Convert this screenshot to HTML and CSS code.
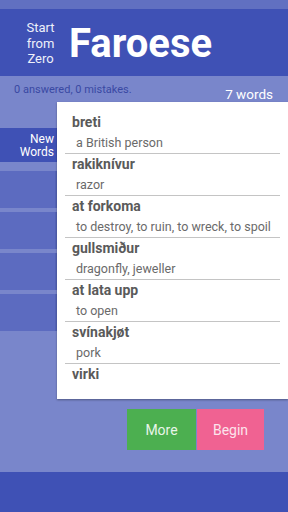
FILE: index.html
```html
<!DOCTYPE html>
<html>
<head>
    <title>Faroese - Start from Zero</title>
    <link rel="stylesheet" href="styles.css">
</head>
<body>
    <div class="status"></div>
    <div class="header">
        <div class="tagline">Start<br>from<br>Zero</div>
        <h1>Faroese</h1>
    </div>
    <div class="sub">
        <span class="progress">0 answered, 0 mistakes.</span>
        <span class="count">7 words</span>
    </div>
    <div class="main">
        <div class="tabs">
            <div class="tab active">New<br>Words</div>
            <div class="tab first"></div>
            <div class="tab"></div>
            <div class="tab"></div>
            <div class="tab"></div>
        </div>
        <div class="card">
            <div class="item">
                <div class="word">breti</div>
                <div class="meaning">a British person</div>
            </div>
            <div class="item">
                <div class="word">rakiknívur</div>
                <div class="meaning">razor</div>
            </div>
            <div class="item">
                <div class="word">at forkoma</div>
                <div class="meaning">to destroy, to ruin, to wreck, to spoil</div>
            </div>
            <div class="item">
                <div class="word">gullsmiður</div>
                <div class="meaning">dragonfly, jeweller</div>
            </div>
            <div class="item">
                <div class="word">at lata upp</div>
                <div class="meaning">to open</div>
            </div>
            <div class="item">
                <div class="word">svínakjøt</div>
                <div class="meaning">pork</div>
            </div>
            <div class="item last">
                <div class="word">virki</div>
            </div>
        </div>
    </div>
    <div class="actions">
        <button class="btn more">More</button>
        <button class="btn begin">Begin</button>
    </div>
    <div class="footer"></div>
</body>
</html>
```

FILE: styles.css
```css
html, body {
    margin: 0;
    height: 100%;
}

body {
    font-family: Roboto, "Noto Sans", sans-serif;
    background-color: #7986cb;
    display: flex;
    flex-direction: column;
    overflow: hidden;
}

.status {
    height: 9px;
    background-color: #6170c1;
}

.header {
    height: 67px;
    background-color: #3f51b5;
    display: flex;
    align-items: center;
}

.tagline {
    width: 41px;
    margin-left: 20px;
    text-align: center;
    color: #eef0fa;
    font-size: 13px;
    line-height: 15.5px;
    margin-top: 2px;
}

h1 {
    margin: 0 0 0 8px;
    color: #fff;
    font-size: 40px;
    font-weight: bold;
    line-height: 1;
    padding-top: 2px;
}

.sub {
    height: 26px;
    display: flex;
    justify-content: space-between;
    position: relative;
}

.progress {
    margin: 7px 0 0 14px;
    font-size: 11px;
    color: #3949a3;
}

.count {
    margin: 10px 15px 0 0;
    font-size: 13.5px;
    color: #fff;
}

.main {
    display: flex;
    height: 297px;
}

.tabs {
    width: 57px;
    padding-top: 26px;
}

.tab {
    height: 37px;
    margin-bottom: 4px;
    background-color: #5c6bc0;
    border-right: 2px solid #5565b8;
    box-sizing: border-box;
}

.tab.active {
    height: 34px;
    margin-bottom: 9px;
    background-color: #3f51b5;
    border-right: none;
    color: #fff;
    font-size: 12px;
    line-height: 12.5px;
    text-align: right;
    padding: 5px 3px 0 0;
}

.card {
    flex: 1;
    background-color: #fff;
    padding: 10px 8px 0 8px;
    box-shadow: 0 1px 2px rgba(0, 0, 0, 0.35);
}

.item {
    border-bottom: 1px solid #c4c4c4;
    margin-left: 0;
}

.item.last {
    border-bottom: none;
}

.word {
    height: 21px;
    line-height: 21px;
    padding-left: 7px;
    font-size: 14px;
    font-weight: bold;
    color: #5a5a5a;
}

.meaning {
    height: 20px;
    line-height: 20px;
    padding-left: 11px;
    font-size: 12.5px;
    color: #6a6a6a;
    white-space: nowrap;
}

.actions {
    display: flex;
    margin-top: 10px;
    padding-left: 127px;
}

.btn {
    height: 41px;
    border: none;
    font-family: Roboto, sans-serif;
    font-size: 14px;
    padding: 0;
    cursor: pointer;
}

.more {
    width: 69px;
    background-color: #4caf50;
    color: #e8f5e9;
}

.begin {
    width: 67px;
    margin-left: 1px;
    background-color: #f06292;
    color: #fce4ec;
}

.footer {
    margin-top: auto;
    height: 40px;
    background-color: #3f51b5;
}
```
